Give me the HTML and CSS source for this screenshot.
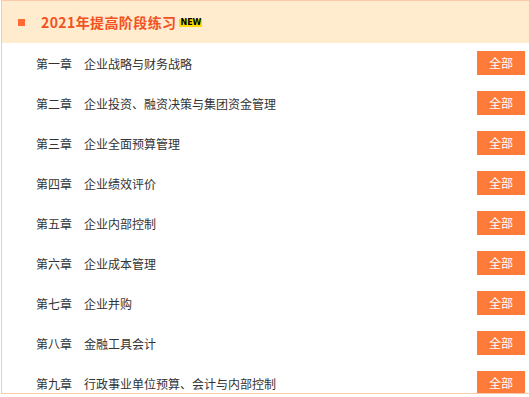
FILE: index.html
```html
<!DOCTYPE html>
<html lang="zh-CN">
<head>
  <meta charset="UTF-8" />
  <meta name="viewport" content="width=device-width, initial-scale=1" />
  <title>2021年提高阶段练习</title>
  <link rel="stylesheet" href="styles.css">
</head>
<body>
  <div class="panel">
    <div class="panel-head">
      <span class="dot"></span>
      <h2 class="panel-title">2021年提高阶段练习</h2>
      <span class="badge-new">NEW</span>
    </div>
    <ul class="chapter-list">
      <li class="chapter"><span class="chapter-name">第一章　企业战略与财务战略</span><a class="btn-all" href="#">全部</a></li>
      <li class="chapter"><span class="chapter-name">第二章　企业投资、融资决策与集团资金管理</span><a class="btn-all" href="#">全部</a></li>
      <li class="chapter"><span class="chapter-name">第三章　企业全面预算管理</span><a class="btn-all" href="#">全部</a></li>
      <li class="chapter"><span class="chapter-name">第四章　企业绩效评价</span><a class="btn-all" href="#">全部</a></li>
      <li class="chapter"><span class="chapter-name">第五章　企业内部控制</span><a class="btn-all" href="#">全部</a></li>
      <li class="chapter"><span class="chapter-name">第六章　企业成本管理</span><a class="btn-all" href="#">全部</a></li>
      <li class="chapter"><span class="chapter-name">第七章　企业并购</span><a class="btn-all" href="#">全部</a></li>
      <li class="chapter"><span class="chapter-name">第八章　金融工具会计</span><a class="btn-all" href="#">全部</a></li>
      <li class="chapter"><span class="chapter-name">第九章　行政事业单位预算、会计与内部控制</span><a class="btn-all" href="#">全部</a></li>
    </ul>
  </div>
</body>
</html>
```

FILE: styles.css
```css
html, body {
  margin: 0;
  padding: 0;
  overflow: hidden;
}

body {
  font-family: "Noto Sans CJK SC", "Liberation Sans", sans-serif;
  background: #fff;
  color: #333;
}

.panel {
  margin-left: 1px;
  width: 540px;
  height: 392px;
  border: 1px solid #fbc8ab;
  overflow: hidden;
}

/* cabecera naranja clara */
.panel-head {
  height: 42px;
  background: #ffebcd;
  display: flex;
  align-items: center;
  padding-left: 16px;
}

.dot {
  width: 7px;
  height: 7px;
  background: #ff6a35;
  margin-right: 16px;
  margin-top: 1px;
}

.panel-title {
  margin: 0;
  font-size: 14px;
  font-weight: bold;
  letter-spacing: 0.4px;
  color: #f4511e;
  line-height: 20px;
}

.badge-new {
  margin-left: 3px;
  margin-top: 2px;
  padding: 0 1px;
  background: #ffdc00;
  color: #000;
  font-family: "DejaVu Sans", sans-serif;
  font-size: 8px;
  font-weight: bold;
  line-height: 8px;
}

.chapter-list {
  list-style: none;
  margin: 0;
  padding: 0;
}

.chapter {
  height: 40px;
  display: flex;
  align-items: center;
  justify-content: space-between;
  padding: 0 17px 0 34px;
}

.chapter-name {
  font-size: 12px;
  color: #333;
}

.btn-all {
  width: 48px;
  height: 24px;
  line-height: 24px;
  text-align: center;
  background: #fe7b39;
  color: #fff;
  font-size: 12px;
  text-decoration: none;
}
```
